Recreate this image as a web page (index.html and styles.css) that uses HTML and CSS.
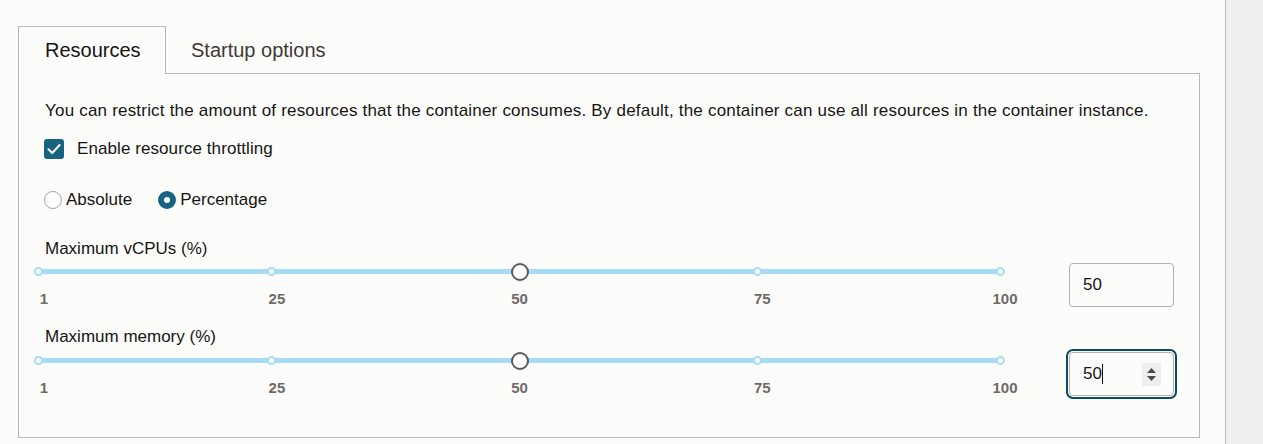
FILE: index.html
```html
<!DOCTYPE html>
<html lang="en">
<head>
<meta charset="utf-8">
<title>Container resources</title>
<link rel="stylesheet" href="styles.css">
</head>
<body>
<div class="layout">
  <main class="main">
    <div class="tabs">
      <div class="tab tab-active">Resources</div>
      <div class="tab">Startup options</div>
    </div>
    <section class="panel">
      <p class="intro">You can restrict the amount of resources that the container consumes. By default, the container can use all resources in the container instance.</p>
      <label class="check-row">
        <span class="checkbox">
          <svg viewBox="0 0 20 20" width="20" height="20"><path d="M4.5 10.2 L8.3 14 L15.6 6" fill="none" stroke="#fff" stroke-width="2" stroke-linecap="round" stroke-linejoin="round"/></svg>
        </span>
        <span>Enable resource throttling</span>
      </label>
      <div class="radio-row">
        <label class="radio-item"><span class="radio"></span><span>Absolute</span></label>
        <label class="radio-item"><span class="radio radio-on"></span><span>Percentage</span></label>
      </div>

      <div class="field">
        <div class="field-label">Maximum vCPUs (%)</div>
        <div class="slider-row">
          <div class="slider">
            <div class="track"></div>
            <span class="tick" style="left:0%"></span>
            <span class="tick" style="left:24.24%"></span>
            <span class="tick" style="left:74.75%"></span>
            <span class="tick" style="left:100%"></span>
            <span class="thumb" style="left:50.06%"></span>
            <div class="labels">
              <span class="lbl" style="left:0%">1</span>
              <span class="lbl" style="left:24.24%">25</span>
              <span class="lbl" style="left:49.49%">50</span>
              <span class="lbl" style="left:74.75%">75</span>
              <span class="lbl" style="left:100%">100</span>
            </div>
          </div>
          <div class="num-input"><span class="num-text">50</span></div>
        </div>
      </div>

      <div class="field field-2">
        <div class="field-label">Maximum memory (%)</div>
        <div class="slider-row">
          <div class="slider">
            <div class="track"></div>
            <span class="tick" style="left:0%"></span>
            <span class="tick" style="left:24.24%"></span>
            <span class="tick" style="left:74.75%"></span>
            <span class="tick" style="left:100%"></span>
            <span class="thumb" style="left:50.06%"></span>
            <div class="labels">
              <span class="lbl" style="left:0%">1</span>
              <span class="lbl" style="left:24.24%">25</span>
              <span class="lbl" style="left:49.49%">50</span>
              <span class="lbl" style="left:74.75%">75</span>
              <span class="lbl" style="left:100%">100</span>
            </div>
          </div>
          <div class="num-input num-focus">
            <span class="num-text">50</span><span class="caret"></span>
            <span class="spinner">
              <svg viewBox="0 0 19 23" width="19" height="23"><path d="M5 10 L9.5 5 L14 10 Z" fill="#4d4946"/><path d="M5 13 L9.5 18 L14 13 Z" fill="#4d4946"/></svg>
            </span>
          </div>
        </div>
      </div>
    </section>
  </main>
  <aside class="side"></aside>
</div>
</body>
</html>
```
FILE: styles.css
```css
* { box-sizing: border-box; }
html, body { margin: 0; padding: 0; }
body {
  background: #fcfcfb;
  font-family: "Liberation Sans", Arial, sans-serif;
  color: #161513;
  font-size: 17px;
}
.layout {
  display: flex;
  height: 444px;
}
.main {
  width: 1225px;
  padding: 26px 25px 0 18px;
}
.side {
  flex: 1;
  background: #f1efed;
  border-left: 1px solid #bdb9b5;
}
.tabs {
  display: flex;
  height: 48px;
  position: relative;
  z-index: 1;
}
.tab {
  font-size: 20px;
  line-height: 46px;
  padding: 0 24px 0 24px;
  color: #3d3935;
  border: 1px solid transparent;
  border-bottom: none;
}
.tab-active {
  width: 148px;
  padding-left: 26px;
  padding-right: 0;
  color: #161513;
  border-color: #bcb8b4;
  background: #fcfcfb;
  height: 48px;
}
.panel {
  border: 1px solid #bcb8b4;
  margin-top: -1px;
  height: 365px;
  padding: 27px 25px 0 26px;
}
.intro {
  margin: 0;
  line-height: 20px;
  letter-spacing: 0.2px;
}
.check-row {
  display: flex;
  align-items: center;
  gap: 13px;
  margin-top: 18px;
  height: 20px;
  margin-left: -1px;
  letter-spacing: 0.08px;
}
.checkbox {
  width: 20px;
  height: 20px;
  border-radius: 3px;
  background: #18637f;
  display: flex;
}
.radio-row {
  display: flex;
  gap: 26px;
  margin-top: 31px;
  height: 20px;
  align-items: center;
  margin-left: -1px;
}
.radio-item {
  display: flex;
  align-items: center;
  gap: 4px;
}
.radio {
  width: 18px;
  height: 18px;
  border-radius: 50%;
  border: 1px solid #a6a29e;
  background: #fff;
}
.radio-on {
  border: 6px solid #18637f;
  background: #fff;
}
.field {
  margin-top: 29px;
}
.field-2 {
  margin-top: 20px;
}
.field-label {
  line-height: 20px;
}
.slider-row {
  display: flex;
  align-items: flex-start;
  margin-top: 4px;
  height: 44px;
}
.field-2 .slider-row { margin-top: 5px; }
.slider {
  position: relative;
  width: 962px;
  height: 44px;
  margin-left: -7px;
}
.track {
  position: absolute;
  left: 0;
  right: 0;
  top: 6px;
  height: 5px;
  background: #a6dcf5;
}
.tick {
  position: absolute;
  top: 4px;
  width: 9px;
  height: 9px;
  margin-left: -4.5px;
  border-radius: 50%;
  border: 2px solid #a6dcf5;
  background: #fff;
}
.thumb {
  position: absolute;
  top: -0.5px;
  width: 18px;
  height: 18px;
  margin-left: -9px;
  border-radius: 50%;
  border: 2px solid #5e5a56;
  background: #fff;
}
.labels {
  position: absolute;
  left: 6px;
  right: -5px;
  top: 27px;
  height: 18px;
}
.lbl {
  position: absolute;
  transform: translateX(-50%);
  font-size: 15px;
  font-weight: bold;
  color: #6f6a66;
  line-height: 18px;
}
.num-input {
  margin-left: auto;
  width: 105px;
  height: 44px;
  border: 1px solid #b5b1ad;
  border-radius: 4px;
  display: flex;
  align-items: center;
  padding: 0 12px 0 13px;
  background: #fcfcfb;
}
.num-text {
  line-height: 20px;
}
.num-focus {
  width: 105px;
  outline: 2px solid #0d4a5f;
  outline-offset: 1px;
}
.caret {
  width: 1px;
  height: 20px;
  background: #161513;
}
.spinner {
  margin-left: auto;
  width: 19px;
  height: 23px;
  background: #efefef;
  display: flex;
}
```
